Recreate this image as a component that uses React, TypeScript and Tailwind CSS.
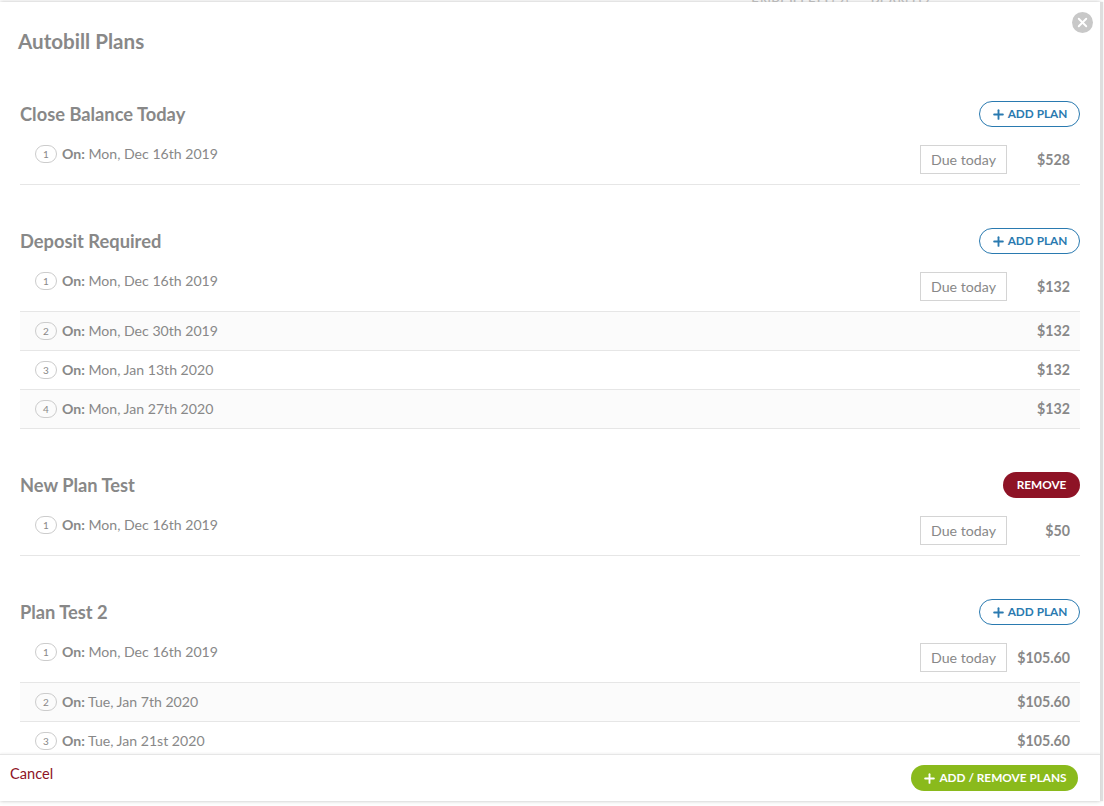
import { Plus, X } from "lucide-react";

const sections = [
  {
    name: "Close Balance Today",
    rows: [{ date: "Mon, Dec 16th 2019", amount: "$528" }],
  },
  {
    name: "Deposit Required",
    rows: [
      { date: "Mon, Dec 16th 2019", amount: "$132" },
      { date: "Mon, Dec 30th 2019", amount: "$132" },
      { date: "Mon, Jan 13th 2020", amount: "$132" },
      { date: "Mon, Jan 27th 2020", amount: "$132" },
    ],
  },
  {
    name: "New Plan Test",
    selected: true,
    rows: [{ date: "Mon, Dec 16th 2019", amount: "$50" }],
  },
  {
    name: "Plan Test 2",
    rows: [
      { date: "Mon, Dec 16th 2019", amount: "$105.60" },
      { date: "Tue, Jan 7th 2020", amount: "$105.60" },
      { date: "Tue, Jan 21st 2020", amount: "$105.60" },
    ],
  },
];

export default function App() {
  return (
    <div className="relative h-[806px] w-[1104px] overflow-hidden bg-white font-['Lato',sans-serif] text-[#888]">
      <div className="flex justify-end gap-[22px] pr-[174px] text-[15px] leading-[3px] text-[#c4c4c4]">
        <span>ENROLLED (2)</span>
        <span>PLAN 02</span>
      </div>

      <div className="absolute left-0 top-[2px] flex h-[799px] w-[1100px] flex-col bg-white shadow-[3px_0_1px_#dedede,0_0_4px_rgba(0,0,0,0.25)]">
        <button className="absolute right-[7px] top-[10px] flex h-[21px] w-[21px] items-center justify-center rounded-full bg-[#c8c8c8] text-white">
          <X size={15} strokeWidth={3} />
        </button>
        <h1 className="pl-[18px] pt-[25px] text-[20.6px] font-bold leading-[28px]">Autobill Plans</h1>

        <div className="min-h-0 flex-1 overflow-hidden px-[20px] pt-[46px]">
          {sections.map((s) => (
            <div key={s.name} className="mb-[43px]">
              <div className="flex h-[26px] items-center justify-between">
                <h2 className="text-[18.3px] font-bold leading-[26px]">{s.name}</h2>
                {s.selected ? (
                  <button className="flex h-[26px] w-[77px] items-center justify-center rounded-full bg-[#8e1326] text-[11.8px] font-bold text-white">
                    REMOVE
                  </button>
                ) : (
                  <button className="flex h-[26px] w-[101px] items-center justify-center gap-[2px] rounded-full border border-[#2a7ab0] pr-[1px] text-[11.8px] font-bold text-[#2a7ab0]">
                    <Plus size={15} strokeWidth={3} />
                    ADD PLAN
                  </button>
                )}
              </div>
              {s.rows.map((r, i) => (
                <div
                  key={r.date}
                  className={`flex border-b border-[#e6e6e6] pl-[15px] pr-[10px] ${
                    i === 0 ? "h-[58px] items-start pt-[18px]" : "h-[39px] items-center"
                  } ${i % 2 === 1 ? "bg-[#fbfbfb]" : ""}`}
                >
                  <span className="mr-[5px] flex h-[18px] w-[22px] items-center justify-center rounded-full border border-[#ccc] text-[10px]">
                    {i + 1}
                  </span>
                  <span className="text-[14.1px] leading-[18px]">
                    <b>On:</b> {r.date}
                  </span>
                  {i === 0 && (
                    <span className="ml-auto flex h-[29px] w-[87px] items-center justify-center border border-[#d4d4d4] text-[14.2px]">
                      Due today
                    </span>
                  )}
                  <span className={`w-[63px] text-right text-[14.2px] font-bold ${i === 0 ? "leading-[29px]" : "ml-auto leading-[18px]"}`}>
                    {r.amount}
                  </span>
                </div>
              ))}
            </div>
          ))}
        </div>

        <div className="flex h-[47px] items-start justify-between border-t border-[#e6e6e6] bg-white pl-[10px] pr-[22px] pt-[10px] shadow-[0_-1px_2px_rgba(0,0,0,0.05)]">
          <a className="text-[14.6px] leading-[18px] text-[#8e1326]">Cancel</a>
          <button className="flex h-[26px] w-[167px] items-center justify-center gap-[2px] rounded-full bg-[#8aba1c] text-[11.8px] font-bold text-white">
            <Plus size={15} strokeWidth={3} />
            ADD / REMOVE PLANS
          </button>
        </div>
      </div>
    </div>
  );
}
